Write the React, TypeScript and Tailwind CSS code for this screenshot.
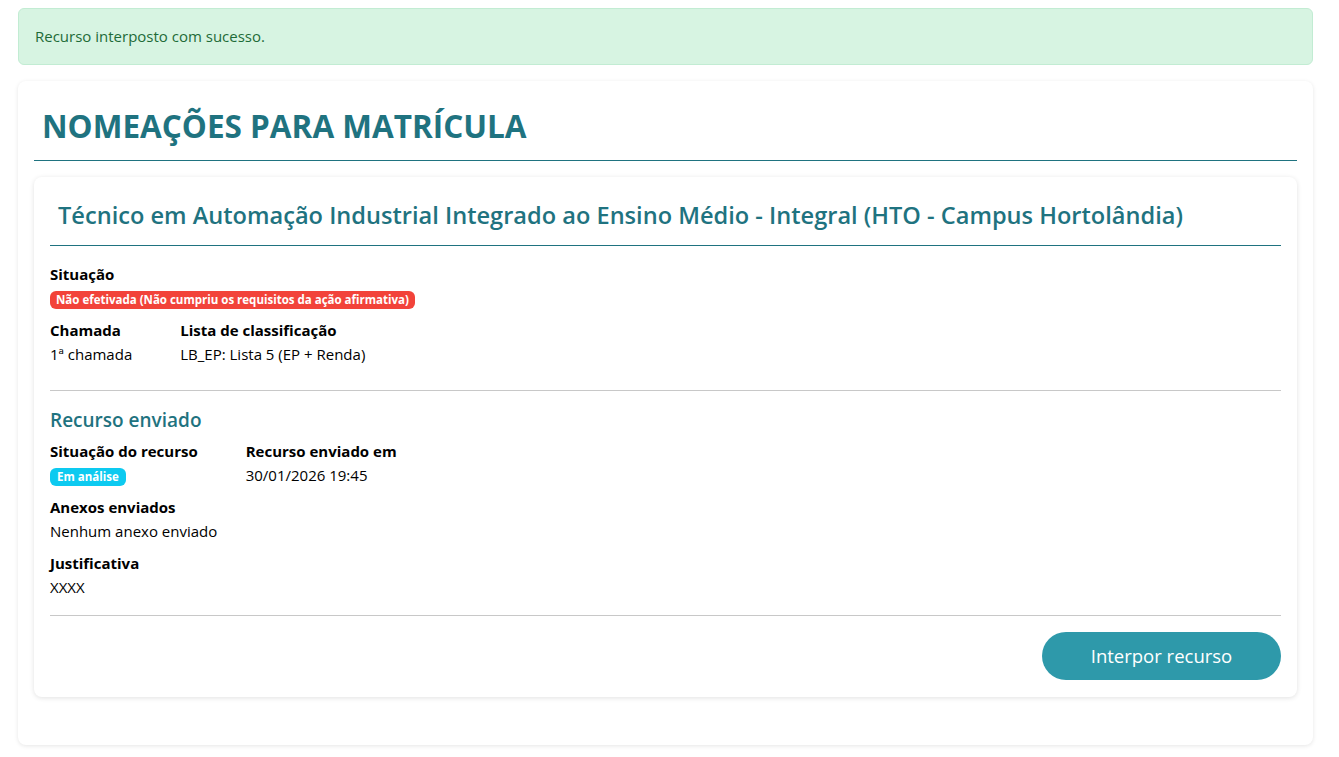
const font = { fontFamily: '"Open Sans", "Noto Sans", sans-serif' };

function Label({ children }: { children: React.ReactNode }) {
  return <p className="font-bold text-[15px] leading-6 text-black">{children}</p>;
}

function Value({ children }: { children: React.ReactNode }) {
  return <p className="text-[15px] leading-6 text-black">{children}</p>;
}

export default function App() {
  return (
    <div className="min-h-screen bg-white pl-[18px] pr-[26px] pt-2 pb-3" style={font}>
      {/* Alerta de sucesso */}
      <div className="bg-[#d7f4e2] border border-[#c2ecd3] rounded-md px-4 h-[57px] flex items-center text-[15px] text-[#1e6b38]">
        Recurso interposto com sucesso.
      </div>

      <div className="mt-4 bg-white rounded-lg shadow-[0_1px_4px_rgba(0,0,0,0.1)] px-4 pt-[23px] pb-[48px]">
        <h1 className="px-2 text-[31.5px] leading-[44px] font-bold text-[#1f7380] pb-[12px] border-b border-[#1f7380]">
          NOMEAÇÕES PARA MATRÍCULA
        </h1>

        <div className="mt-4 rounded-lg shadow-[0_1px_5px_rgba(0,0,0,0.12)] px-4 pt-5 pb-[17px]">
          <h2 className="px-2 text-[23.6px] leading-9 font-semibold text-[#1f7380] pb-[12px] border-b border-[#1f7380]">
            Técnico em Automação Industrial Integrado ao Ensino Médio - Integral (HTO - Campus Hortolândia)
          </h2>

          <div className="mt-4">
            <Label>Situação</Label>
            <span className="inline-flex items-center h-[18px] px-[6px] rounded-md bg-[#f2433a] text-white text-[11.5px] font-bold leading-none">
              Não efetivada (Não cumpriu os requisitos da ação afirmativa)
            </span>
          </div>

          <div className="mt-2 flex gap-12">
            <div>
              <Label>Chamada</Label>
              <Value>1ª chamada</Value>
            </div>
            <div>
              <Label>Lista de classificação</Label>
              <Value>LB_EP: Lista 5 (EP + Renda)</Value>
            </div>
          </div>

          <hr className="mt-6 border-t border-[#c8c8c8]" />

          <h3 className="mt-[17px] text-[19px] leading-6 font-semibold text-[#1f7380]">Recurso enviado</h3>

          <div className="mt-[7px] flex gap-12">
            <div>
              <Label>Situação do recurso</Label>
              <span className="inline-flex items-center h-[18px] px-[7px] rounded-md bg-[#0dcaf0] text-white text-[11.5px] font-bold leading-none">
                Em análise
              </span>
            </div>
            <div>
              <Label>Recurso enviado em</Label>
              <Value>30/01/2026 19:45</Value>
            </div>
          </div>

          <div className="mt-2">
            <Label>Anexos enviados</Label>
            <Value>Nenhum anexo enviado</Value>
          </div>

          <div className="mt-2">
            <Label>Justificativa</Label>
            <Value>XXXX</Value>
          </div>

          <hr className="mt-4 border-t border-[#c8c8c8]" />

          <div className="mt-4 flex justify-end">
            <button className="h-12 w-[239px] rounded-full bg-[#2e99aa] text-white text-[18.5px]">
              Interpor recurso
            </button>
          </div>
        </div>
      </div>
    </div>
  );
}
